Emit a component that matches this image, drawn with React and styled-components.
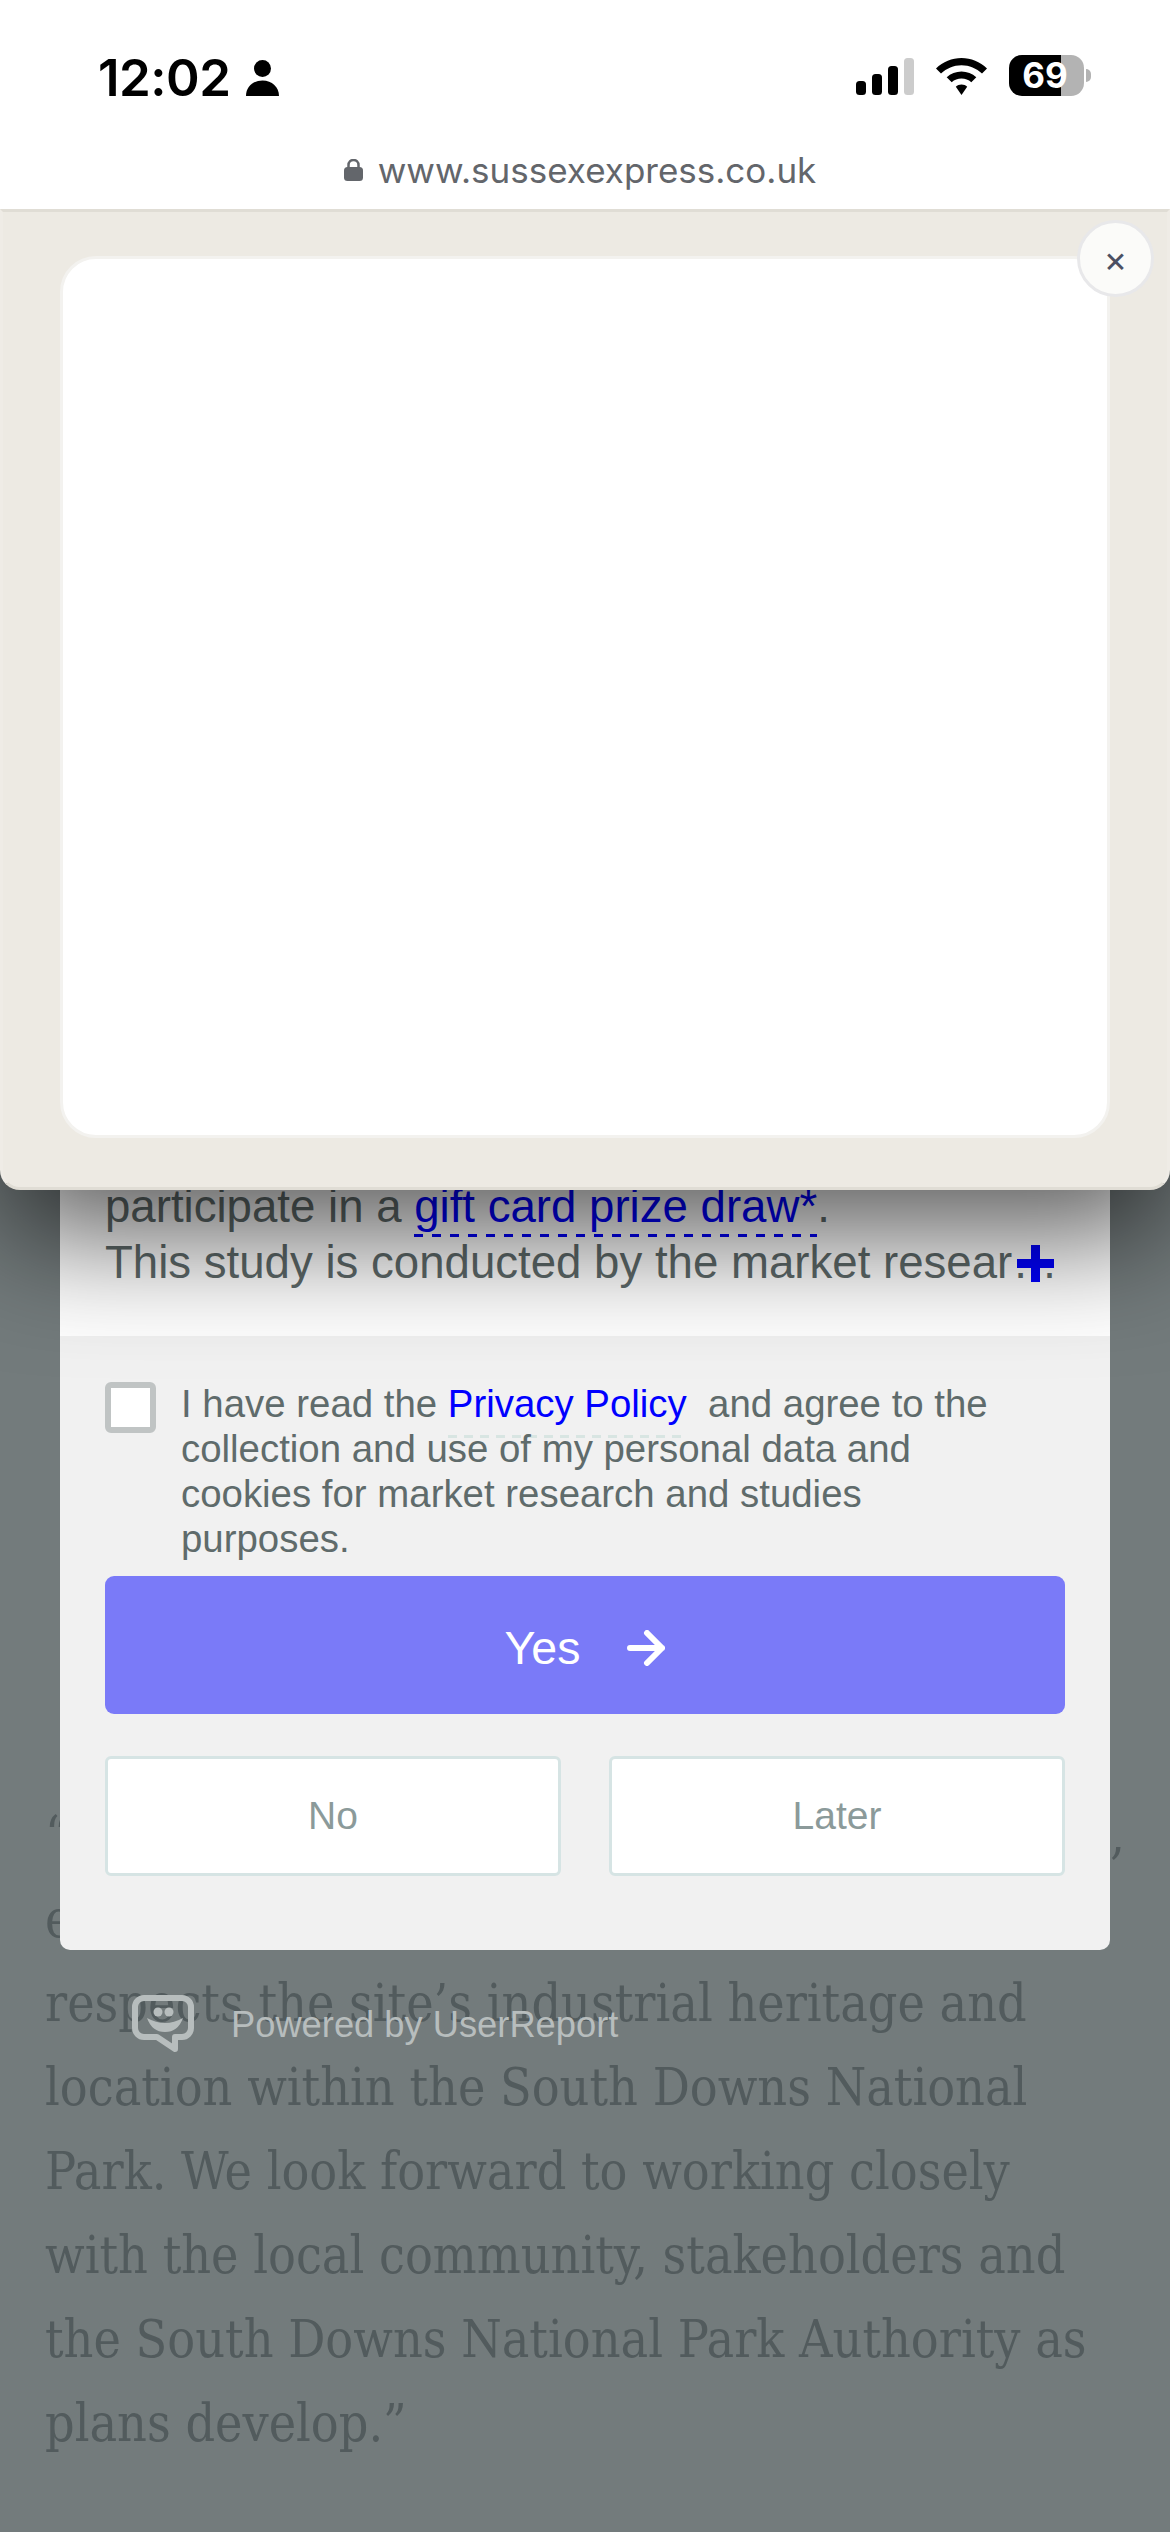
import React from 'react';
import styled, { createGlobalStyle } from 'styled-components';

const GlobalStyle = createGlobalStyle`
  html, body {
    margin: 0;
    padding: 0;
    background: #737b7c;
  }
  * {
    box-sizing: border-box;
  }
`;

const Screen = styled.div`
  position: relative;
  width: 1170px;
  height: 2532px;
  overflow: hidden;
  background: #737b7c;
`;

const Header = styled.header`
  position: relative;
  z-index: 3;
  height: 209px;
  background: #fff;
`;

const StatusBar = styled.div`
  display: flex;
  justify-content: space-between;
  align-items: flex-end;
  height: 98px;
  padding: 0 86px 2px 98px;
  font-family: Inter, "Liberation Sans", sans-serif;
  color: #000;
`;

const Clock = styled.div`
  display: flex;
  align-items: flex-end;
  gap: 15px;
  font-size: 51px;
  font-weight: 600;
  line-height: 37px;
  letter-spacing: -0.5px;
`;

const StatusIcons = styled.div`
  display: flex;
  align-items: center;
  gap: 22px;
`;

const Battery = styled.div`
  position: relative;
  width: 75px;
  height: 41px;
  margin-top: -2px;
  border-radius: 13px;
  background: linear-gradient(to right, #000 52px, #b3b3b3 52px);
  color: #fff;
  font-size: 35px;
  font-weight: 700;
  line-height: 41px;
  text-align: center;
  padding-right: 3px;

  &::after {
    content: '';
    position: absolute;
    right: -7px;
    top: 14px;
    width: 5px;
    height: 13px;
    border-radius: 0 6px 6px 0;
    background: #b3b3b3;
  }
`;

const UrlBar = styled.div`
  display: flex;
  justify-content: center;
  align-items: center;
  gap: 15px;
  height: 50px;
  margin-top: 47px;
  padding-right: 10px;
  font-family: Inter, "Liberation Sans", sans-serif;
  font-size: 35px;
  color: #63666b;
`;

const Article = styled.main`
  padding: 1584px 0 0 45px;
  font-family: "DejaVu Serif", "Liberation Serif", serif;
  font-stretch: condensed;
  font-size: 51.5px;
  line-height: 84px;
  color: #525b5d;
`;

const ArticleLine = styled.div`
  display: flex;
  justify-content: space-between;
  width: 1080px;
  white-space: nowrap;
`;

const DialogWrap = styled.div`
  position: absolute;
  z-index: 1;
  top: 1179px;
  left: 60px;
  right: 60px;
  font-family: "Liberation Sans", Arial, sans-serif;
`;

const Dialog = styled.section`
  overflow: hidden;
  border-radius: 0 0 10px 10px;
  background: #f1f1f1;
`;

const Intro = styled.div`
  position: relative;
  height: 157px;
  padding: 0 45px;
  background: #fff;
  font-size: 45.6px;
  line-height: 56px;
  color: #5f6b6b;
`;

const IntroLine = styled.div`
  white-space: nowrap;
`;

const DashedLink = styled.a`
  color: #00f;
  padding-bottom: ${(p) => p.$drop}px;
  background: repeating-linear-gradient(to right, ${(p) => p.$line} 0 9px, transparent 9px ${(p) => p.$period}px) left bottom / 100% 3px no-repeat;
`;

const MoreIcon = styled.svg`
  position: absolute;
  left: 957px;
  top: 66px;
  width: 37px;
  height: 37px;
`;

const Consent = styled.div`
  padding: 45px 45px 74px;
`;

const ConsentRow = styled.label`
  display: flex;
  gap: 25px;
  margin-bottom: 15px;
  padding-right: 40px;
  font-size: 38.4px;
  line-height: 45px;
  color: #5f6b6b;
`;

const Checkbox = styled.span`
  flex: none;
  width: 51px;
  height: 51px;
  margin-top: 1px;
  border: 6px solid #c0c4c4;
  border-radius: 6px;
  background: #fff;
`;

const YesButton = styled.button`
  display: flex;
  justify-content: center;
  align-items: center;
  gap: 47px;
  width: 100%;
  height: 138px;
  margin-bottom: 42px;
  padding-top: 6px;
  border: 0;
  border-radius: 9px;
  background: #7a7af8;
  color: #fff;
  font: inherit;
  font-size: 46.5px;
`;

const ButtonRow = styled.div`
  display: grid;
  grid-template-columns: 1fr 1fr;
  gap: 48px;
`;

const GhostButton = styled.button`
  height: 120px;
  border: 3px solid #d6e4e4;
  border-radius: 6px;
  background: #fff;
  color: #8b9a9a;
  font: inherit;
  font-size: 39px;
`;

const Powered = styled.footer`
  display: flex;
  align-items: flex-start;
  gap: 37px;
  margin-top: 45px;
  padding-left: 72px;
  font-size: 36.3px;
  line-height: 60px;
  color: #b7bdbd;
`;

const Panel = styled.aside`
  position: absolute;
  z-index: 2;
  top: 209px;
  left: 0;
  right: 0;
  height: 981px;
  padding: 44px 57px 49px;
  border: 3px solid #e0ddd5;
  border-left-color: #efece6;
  border-right-color: #efece6;
  border-radius: 0 0 20px 20px;
  background: #edeae3;
  box-shadow: 0 45px 120px rgba(0, 0, 0, 0.65);
`;

const PanelFrame = styled.div`
  height: 100%;
  border: 3px solid #f3f2ef;
  border-radius: 36px;
  background: #fff;
`;

const CloseButton = styled.button`
  position: absolute;
  top: 8px;
  right: 13px;
  width: 77px;
  height: 77px;
  padding: 0;
  border: 3px solid #e8e8ea;
  border-radius: 50%;
  background: #fbfbf9;
  color: #4b5063;
  font-family: Inter, "Liberation Sans", sans-serif;
  font-size: 36px;
  line-height: 66px;
`;

function SignalIcon() {
  return (
    <svg width="58" height="37" viewBox="0 0 58 37">
      <rect x="0" y="23" width="10" height="14" rx="3.5" fill="#000" />
      <rect x="16" y="16" width="10" height="21" rx="3.5" fill="#000" />
      <rect x="32" y="8" width="10" height="29" rx="3.5" fill="#000" />
      <rect x="48" y="0" width="10" height="37" rx="3.5" fill="#ccc" />
    </svg>
  );
}

function WifiIcon() {
  return (
    <svg width="51" height="37" viewBox="0 0 51 37">
      <path d="M25.5 0C35 0 44 3.7 51 10.5L46 15.5C40.5 10.3 33.3 7.2 25.5 7.2C17.7 7.2 10.5 10.3 5 15.5L0 10.5C7 3.7 16 0 25.5 0Z" fill="#000" />
      <path d="M25.5 13.5C31 13.5 36.3 15.6 40.3 19.3L35.3 24.3C32.6 21.9 29.2 20.6 25.5 20.6C21.8 20.6 18.4 21.9 15.7 24.3L10.7 19.3C14.7 15.6 20 13.5 25.5 13.5Z" fill="#000" />
      <path d="M25.5 26.5C27.7 26.5 29.7 27.3 31.2 28.7L25.5 37L19.8 28.7C21.3 27.3 23.3 26.5 25.5 26.5Z" fill="#000" />
    </svg>
  );
}

function PersonIcon() {
  return (
    <svg width="33" height="36" viewBox="0 0 33 36">
      <circle cx="16.5" cy="8.5" r="8.5" fill="#000" />
      <path d="M0 36C0 27 7 20.5 16.5 20.5C26 20.5 33 27 33 36Z" fill="#000" />
    </svg>
  );
}

function LockIcon() {
  return (
    <svg width="19" height="22" viewBox="0 0 19 22">
      <path d="M4.5 9V6a5 5 0 0 1 10 0v3" fill="none" stroke="#63666b" strokeWidth="2.5" />
      <rect x="0" y="8" width="19" height="14" rx="3.5" fill="#63666b" />
    </svg>
  );
}

function ArrowIcon() {
  return (
    <svg width="38" height="36" viewBox="0 0 38 36">
      <path d="M3 18H35M20 3L35 18L20 33" fill="none" stroke="#fff" strokeWidth="6" strokeLinecap="round" strokeLinejoin="round" />
    </svg>
  );
}

function UserReportLogo() {
  return (
    <svg width="62" height="60" viewBox="0 0 62 60">
      <path d="M12 3H50a9 9 0 0 1 9 9V33a9 9 0 0 1-9 9H43V54L25 42H12a9 9 0 0 1-9-9V12a9 9 0 0 1 9-9Z" fill="none" stroke="#b7bdbd" strokeWidth="6" strokeLinejoin="round" />
      <circle cx="26" cy="17" r="4.5" fill="#b7bdbd" />
      <circle cx="37" cy="17" r="4.5" fill="#b7bdbd" />
      <path d="M15 23Q33 33 51 23Q46 37 33 37Q20 37 15 23Z" fill="#b7bdbd" />
    </svg>
  );
}

export default function App() {
  return (
    <Screen>
      <GlobalStyle />
      <Header>
        <StatusBar>
          <Clock>
            12:02
            <PersonIcon />
          </Clock>
          <StatusIcons>
            <SignalIcon />
            <WifiIcon />
            <Battery>69</Battery>
          </StatusIcons>
        </StatusBar>
        <UrlBar>
          <LockIcon />
          www.sussexexpress.co.uk
        </UrlBar>
      </Header>

      <Article>
        <ArticleLine>
          <span>“</span>
          <span>,</span>
        </ArticleLine>
        <ArticleLine>e</ArticleLine>
        <ArticleLine>respects the site’s industrial heritage and</ArticleLine>
        <ArticleLine>location within the South Downs National</ArticleLine>
        <ArticleLine>Park. We look forward to working closely</ArticleLine>
        <ArticleLine>with the local community, stakeholders and</ArticleLine>
        <ArticleLine>the South Downs National Park Authority as</ArticleLine>
        <ArticleLine>plans develop.”</ArticleLine>
      </Article>

      <DialogWrap>
        <Dialog>
          <Intro>
            <IntroLine>
              participate in a <DashedLink $line="#00f" $drop={5} $period={18}>gift card prize draw*</DashedLink>.
            </IntroLine>
            <IntroLine>This study is conducted by the market resear…</IntroLine>
            <MoreIcon viewBox="0 0 37 37">
              <rect x="14" y="0" width="9" height="37" fill="#00f" />
              <rect x="0" y="14" width="37" height="9" fill="#00f" />
            </MoreIcon>
          </Intro>
          <Consent>
            <ConsentRow>
              <Checkbox />
              <span>
                I have read the <DashedLink $line="#d8e5e2" $drop={13} $period={16}>Privacy Policy</DashedLink> &nbsp;and agree to the
                collection and use of my personal data and cookies for market research and
                studies purposes.
              </span>
            </ConsentRow>
            <YesButton>
              Yes
              <ArrowIcon />
            </YesButton>
            <ButtonRow>
              <GhostButton>No</GhostButton>
              <GhostButton>Later</GhostButton>
            </ButtonRow>
          </Consent>
        </Dialog>
        <Powered>
          <UserReportLogo />
          Powered by UserReport
        </Powered>
      </DialogWrap>

      <Panel>
        <PanelFrame />
        <CloseButton>×</CloseButton>
      </Panel>
    </Screen>
  );
}
